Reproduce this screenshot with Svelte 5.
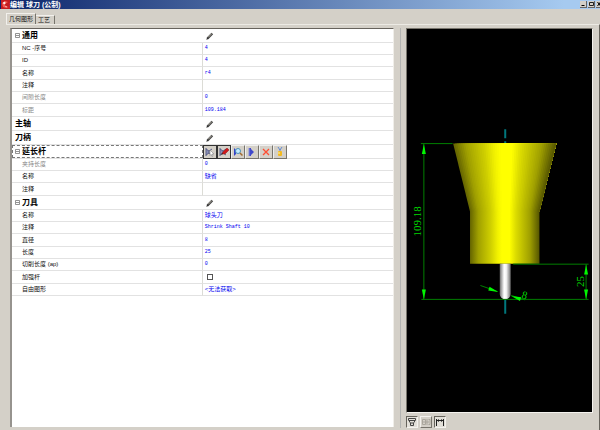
<script lang="ts">
  type Row = { label: string; value?: string; cjk?: boolean; dim?: boolean; check?: boolean };
  type Group = { name: string; open: boolean; tools?: boolean; rows: Row[] };

  let reinforced = $state(false);

  const groups: Group[] = [
    {
      name: '通用', open: true,
      rows: [
        { label: 'NC -序号', value: '4' },
        { label: 'ID', value: '4' },
        { label: '名称', value: 'r4' },
        { label: '注释' },
        { label: '间隙长度', value: '0', dim: true },
        { label: '标距', value: '109.184', dim: true },
      ],
    },
    { name: '主轴', open: false, rows: [] },
    { name: '刀柄', open: false, rows: [] },
    {
      name: '延长杆', open: true, tools: true,
      rows: [
        { label: '夹持长度', value: '0', dim: true },
        { label: '名称', value: '缺省', cjk: true },
        { label: '注释' },
      ],
    },
    {
      name: '刀具', open: true,
      rows: [
        { label: '名称', value: '球头刀', cjk: true },
        { label: '注释', value: 'Shrink Shaft 10' },
        { label: '直径', value: '8' },
        { label: '长度', value: '25' },
        { label: '切削长度 (ap)', value: '0' },
        { label: '加强杆', check: true },
        { label: '自由图形', value: '<无法获取>', cjk: true },
      ],
    },
  ];
  const tools = ['选择', '编辑', '查找', '插入', '删除', '锁定'];

  // brightness of the yellow surface across its width, as [position, level]
  const shade = [[0, 100], [0.12, 160], [0.3, 208], [0.4, 242], [0.46, 255], [0.57, 255], [0.66, 220], [0.86, 160], [1, 85]];

  function level(t: number) {
    for (let i = 1; i < shade.length; i++) {
      const [a, va] = shade[i - 1];
      const [b, vb] = shade[i];
      if (t <= b) return Math.round(va + ((vb - va) * (t - a)) / (b - a));
    }
    return 85;
  }

  // the cone is built from tapering facets so that its shading narrows with it
  const COUNT = 52;
  const facets = Array.from({ length: COUNT }, (_, i) => {
    const a = i / COUNT;
    const v = level((i + 0.5) / COUNT);
    return {
      d: `M${452.5 + 104 * a} 142.5L556.5 142.5L539.5 211L${469.5 + 70 * a} 211z`,
      fill: `rgb(${v},${v},0)`,
    };
  });
</script>

{#snippet tool(i: number)}
  <svg viewBox="0 0 12 12" width="12" height="12" aria-hidden="true">
    {#if i === 0 || i === 1}
      <path d="M2 2v8M2 3l3 2v2L2 9M5 5l3-2M5 7l3 2" fill="#8a90b8" stroke="#5b6088" />
    {/if}
    {#if i === 0}
      <path d="M6 4l4 4-2 0 1 2-1 .5-1-2-1 1z" fill="#fff" stroke="#777" stroke-width=".5" />
    {:else if i === 1}
      <path d="M4 8l1-2 4-4 2 2-4 4z" fill="#d0181c" stroke="#811" stroke-width=".5" />
      <path d="M3 9l1-2 1 1z" fill="#222" />
    {:else if i === 2}
      <path d="M2 2v8l2-2V4z" fill="#3440c8" />
      <circle cx="6" cy="5" r="2.5" fill="#c4ecff" stroke="#4a90b8" />
      <path d="M8 7l2.500 2.500" stroke="#a26a30" stroke-width="1.500" />
    {:else if i === 3}
      <path d="M3 2h2v1l3 3-3 3v1H3z" fill="#4048cc" />
      <path d="M3 2v8" stroke="#8890d8" />
    {:else if i === 4}
      <path d="M3 3l6 6M9 3L3 9" stroke="#ff4c30" stroke-width="1.300" />
    {:else}
      <path d="M4 1l2 3 2-3M6 3v3" stroke="#6289d0" fill="none" />
      <rect x="4" y="5" width="4" height="5" rx="1" fill="#f4ba20" />
      <path d="M5 6v2" stroke="#fff1a0" />
    {/if}
  </svg>
{/snippet}

{#snippet arrow(x: number, y: number, angle: number)}
  <path d="M0 0l-2 10h4z" fill="#00f800" transform="translate({x} {y}) rotate({angle})" />
{/snippet}

<div class="window">
  <header class="titlebar">
    <svg viewBox="0 0 9 9" width="9" height="9" aria-hidden="true">
      <rect width="9" height="9" fill="#c41c20" />
      <path d="M1 3l3-2 3 1-3 2v2l4 1-3 1-3-1z" fill="#f25a50" />
      <path d="M2 3l2-1v2zM4 6l2 1" fill="#fff" stroke="#fff" stroke-width=".6" />
    </svg>
    <h1>编辑 球刀 (公制)</h1>
    <div class="caption">
      <button aria-label="最小化"><svg viewBox="0 0 7 6" width="7" height="6"><path d="M1.500 4.500h3" stroke="#000" /></svg></button>
      <button aria-label="最大化"><svg viewBox="0 0 7 6" width="7" height="6"><path d="M1.500 1.500h4v3h-4z" fill="none" stroke="#222" /></svg></button>
      <button aria-label="关闭"><svg viewBox="0 0 7 6" width="7" height="6"><path d="M1.500 1l3 4M4.500 1l-3 4" stroke="#000" /></svg></button>
    </div>
  </header>

  <div class="tabs" role="tablist">
    <button class="tab active" role="tab" aria-selected="true">几何图形</button>
    <button class="tab" role="tab" aria-selected="false">工艺</button>
  </div>

  <main class="page">
    <section class="grid">
      <table>
        <colgroup><col class="half" /><col /></colgroup>
        {#each groups as group}
          <tbody>
            <tr class="head">
              <th scope="rowgroup" class:focused={group.tools}>
                <div class="name">
                  {#if group.open}
                    <svg viewBox="0 0 5 5" width="5" height="5" aria-hidden="true"><path d="M.5.5h4v4h-4zM1 2.500h3" fill="none" stroke="#666" stroke-width=".7" /></svg>
                  {/if}
                  <span>{group.name}</span>
                </div>
              </th>
              <td>
                {#if group.tools}
                  <div class="tools">
                    {#each tools as label, i}
                      <button class:framed={i < 2} aria-label={label}>{@render tool(i)}</button>
                    {/each}
                  </div>
                {:else}
                  <button class="pencil" aria-label="编辑">
                    <svg viewBox="0 0 8 8" width="8" height="8"><path d="M1.500 6.500L6.300 1.500" stroke="#444" stroke-width="2.400" /><path d="M2.300 5.200L5.800 1.600" stroke="#bdb9ac" stroke-width=".9" /><path d="M.3 7.700l.8-2.200 1.400 1.400z" fill="#222" /></svg>
                  </button>
                {/if}
              </td>
            </tr>
          </tbody>
          {#if group.rows.length}
            <tbody>
              {#each group.rows as row}
                <tr class="item">
                  <th scope="row" class:dim={row.dim}>
                    {#if row.check}<label for="reinforced">{row.label}</label>{:else}{row.label}{/if}
                  </th>
                  <td class:cjk={row.cjk}>
                    {#if row.check}
                      <input id="reinforced" type="checkbox" bind:checked={reinforced} />
                    {:else}{row.value ?? ''}{/if}
                  </td>
                </tr>
              {/each}
            </tbody>
          {/if}
        {/each}
      </table>
    </section>

    <div class="splitter"></div>

    <section class="preview">
      <div class="canvas">
        <svg viewBox="406 29 186 382" role="img" aria-label="刀具预览">
          <defs>
            <linearGradient id="body">
              {#each shade as [at, v]}
                <stop offset={at} stop-color="rgb({v},{v},0)" />
              {/each}
            </linearGradient>
            <linearGradient id="steel">
              <stop offset="0" stop-color="#707070" />
              <stop offset=".4" stop-color="#fff" />
              <stop offset=".6" stop-color="#f4f4f4" />
              <stop offset="1" stop-color="#6c6c6c" />
            </linearGradient>
          </defs>
          <path d="M505 128v9M505 140v3M505 300v14" stroke="#00777c" stroke-width="2" />
          {#each facets as facet}
            <path d={facet.d} fill={facet.fill} />
          {/each}
          <path d="M469.500 210.500h70v53h-70z" fill="url(#body)" />
          <path d="M499.500 263.500h11V294a5.500 5.500 0 0 1-11 0z" fill="url(#steel)" />
          <g stroke="#008000" fill="none">
            <path d="M420 142.500h32M420.500 299.500H589M513 264h76M423 143v156M586.500 264v35" />
            <path d="M480 285.500l17 6M511 295.500l14 4.500" />
          </g>
          {@render arrow(423, 143, 0)}
          {@render arrow(423, 299.5, 180)}
          {@render arrow(586.5, 264.5, 0)}
          {@render arrow(586.5, 299.5, 180)}
          {@render arrow(498, 292, 109)}
          {@render arrow(511, 296, -71)}
          <g class="dims">
            <text transform="translate(420 236) rotate(-90)">109.18</text>
            <text transform="translate(584 287) rotate(-90)">25</text>
            <text transform="translate(521 298) rotate(15)">8</text>
          </g>
        </svg>
      </div>
      <div class="viewbar">
        <button class="on" aria-label="显示刀具"><svg viewBox="0 0 10 10" width="10" height="10"><path d="M1.500 1.500h7v1.500L6.500 6v2.500h-3V6l-2-3zM2 3.500h6M4 6h2" fill="none" stroke="#333" stroke-width=".9" /></svg></button>
        <button aria-label="显示夹具"><svg viewBox="0 0 10 10" width="10" height="10"><path d="M1.500 2.500h3v5h-3zM6 2v6M7.500 2.500H9v5H7.500M2 5h6" fill="none" stroke="#aaa69d" /></svg></button>
        <button class="on" aria-label="显示尺寸"><svg viewBox="0 0 10 10" width="10" height="10"><path d="M1.500 2v7M8.500 2v7M2 3.500h6" fill="none" stroke="#222" /><path d="M2 3.500l2-1.500v3zM8 3.500L6 2v3z" fill="#222" /></svg></button>
      </div>
    </section>
  </main>
</div>

<style>
  :global(body) { margin: 0; background: #d4d0c8; }
  .window {
    box-sizing: border-box;
    min-height: 100vh;
    display: flex;
    flex-direction: column;
    background: #d4d0c8;
    font: 6px/11px "Liberation Sans", "Noto Sans CJK SC", sans-serif;
    color: #111;
  }
  button { font: inherit; color: inherit; padding: 0; margin: 0; border: 0; background: #d4d0c8; box-sizing: border-box; }
  svg { display: block; flex: none; }

  .titlebar {
    display: flex;
    align-items: center;
    height: 9px;
    padding-left: 1px;
    background: linear-gradient(90deg, #0a246a, #a6caf0 94%);
    overflow: hidden;
  }
  h1 { margin: 0; flex: 1; font-size: 7px; line-height: 9px; font-weight: 700; color: #fff; white-space: nowrap; }
  .caption { display: flex; gap: 1px; margin-right: -3px; }
  .caption button { width: 7px; height: 7px; border-right: 1px solid #666; border-bottom: 1px solid #666; overflow: hidden; }

  .tabs { display: flex; align-items: flex-end; height: 15px; padding: 0 6px; }
  .tab { height: 9px; padding: 0 4px 0 2px; line-height: 9px; border-top: 1px solid #f2f0ec; border-right: 1px solid #77746c; }
  .tab.active { height: 11px; padding: 0 2px; border-left: 1px solid #f2f0ec; line-height: 10px; }

  .page {
    flex: 1;
    display: flex;
    margin-left: 6px;
    padding: 3px 6px 2px 4px;
    border-top: 1px solid #eceae4;
    border-right: 1px solid #66635c;
  }
  .grid {
    flex: 1;
    min-width: 0;
    margin-bottom: 1px;
    background: #fff;
    border-top: 1px solid #66625c;
    border-left: 2px solid #96938e;
    border-right: 1px solid #f0eee9;
  }
  table { width: 100%; table-layout: fixed; border-spacing: 0; }
  .half { width: 50%; }
  th, td { box-sizing: border-box; padding: 0; text-align: left; font-weight: 400; white-space: nowrap; border-bottom: 1px solid #e2e2e2; }
  .head th, .head td { height: 14px; }
  .item th, .item td { height: 12px; }
  .item:nth-child(3n) th, .item:nth-child(3n) td { height: 13px; }
  .item th { padding-left: 10px; border-right: 1px solid #dcdcd6; }
  .item td { padding-left: 2px; font-family: "Liberation Mono", monospace; font-size: 5px; color: #0000f0; }
  .item td.cjk { font-family: "Liberation Sans", "Noto Sans CJK SC", sans-serif; font-size: 6px; }
  .item th.dim { color: #888; }

  .name { display: flex; align-items: center; gap: 2px; padding-left: 3px; font-size: 8px; line-height: 13px; font-weight: 700; color: #000; }
  .focused .name { outline: 1px dashed #777; outline-offset: -1px; }
  .pencil { display: block; margin-left: 3px; background: none; }
  .tools { display: flex; height: 14px; margin-bottom: -1px; }
  .tools button { width: 14px; height: 14px; border: 1px solid; border-color: #eee #77746c #77746c #eee; }
  .tools .framed { border-color: #333; }

  input[type="checkbox"] { appearance: none; display: block; width: 6px; height: 6px; margin: 0 2px; border: 1px solid #555; background: #fff; box-sizing: border-box; }
  input[type="checkbox"]:checked { background: #444; }

  .splitter { width: 1px; margin: 0 5px 0 6px; background: #b4b4b2; }
  .preview { flex: 0 0 32%; display: flex; flex-direction: column; }
  .canvas {
    flex: 1;
    display: flex;
    background: #000;
    border: 1px solid;
    border-color: #77746c #f4f2ee #f4f2ee #77746c;
  }
  .canvas svg { width: 100%; height: auto; flex: 1; }
  .dims { fill: #00d800; font: 11px "Liberation Serif", serif; }
  .viewbar { display: flex; gap: 2px; height: 12px; margin-top: 3px; }
  .viewbar button { width: 12px; height: 12px; border: 1px solid; border-color: #f4f2ee #77746c #77746c #f4f2ee; }
  .viewbar .on { border-color: #66635c #f4f2ee #f4f2ee #66635c; background: #e2dfd8; }
</style>
